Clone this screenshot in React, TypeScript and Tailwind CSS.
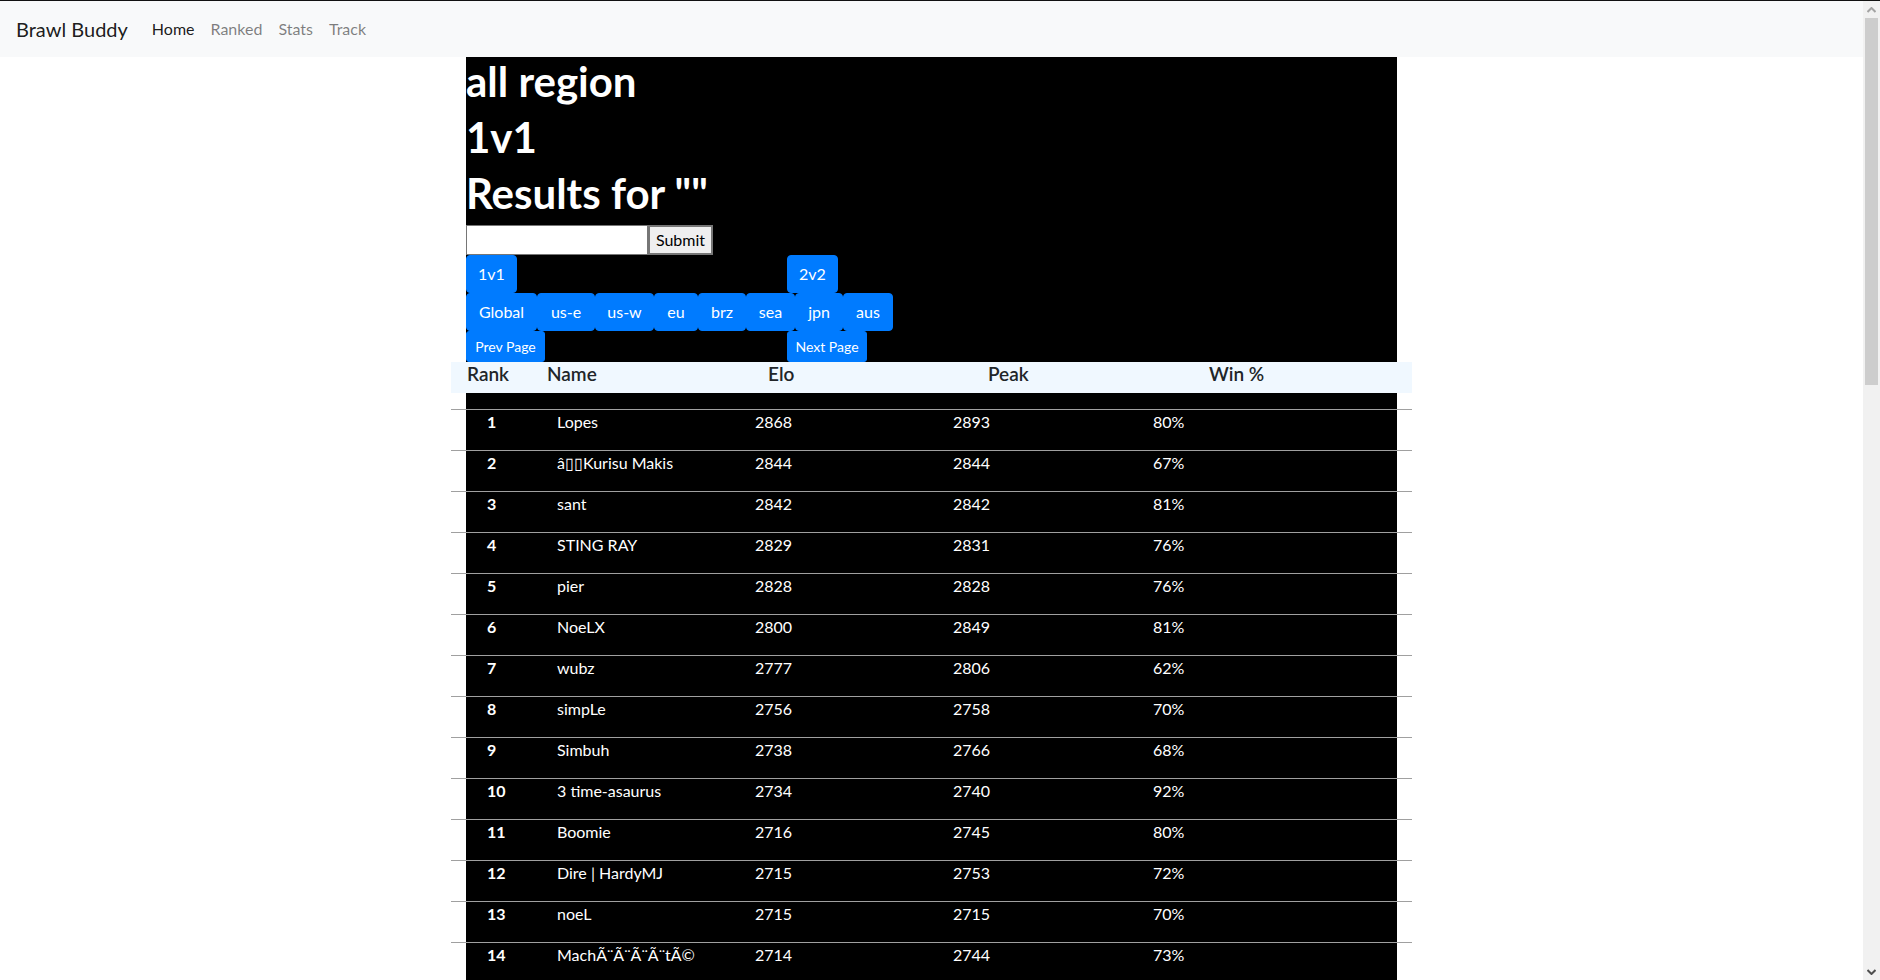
import React, { useState } from "react";

interface Player {
  rank: number;
  name: string;
  elo: number;
  peak: number;
  win: string;
}

const players: Player[] = [
  { rank: 1, name: "Lopes", elo: 2868, peak: 2893, win: "80%" },
  { rank: 2, name: "â\u25AF\u25AFKurisu Makis", elo: 2844, peak: 2844, win: "67%" },
  { rank: 3, name: "sant", elo: 2842, peak: 2842, win: "81%" },
  { rank: 4, name: "STING RAY", elo: 2829, peak: 2831, win: "76%" },
  { rank: 5, name: "pier", elo: 2828, peak: 2828, win: "76%" },
  { rank: 6, name: "NoeLX", elo: 2800, peak: 2849, win: "81%" },
  { rank: 7, name: "wubz", elo: 2777, peak: 2806, win: "62%" },
  { rank: 8, name: "simpLe", elo: 2756, peak: 2758, win: "70%" },
  { rank: 9, name: "Simbuh", elo: 2738, peak: 2766, win: "68%" },
  { rank: 10, name: "3 time-asaurus", elo: 2734, peak: 2740, win: "92%" },
  { rank: 11, name: "Boomie", elo: 2716, peak: 2745, win: "80%" },
  { rank: 12, name: "Dire | HardyMJ", elo: 2715, peak: 2753, win: "72%" },
  { rank: 13, name: "noeL", elo: 2715, peak: 2715, win: "70%" },
  { rank: 14, name: "MachÃ¨Ã¨Ã¨Ã¨tÃ©", elo: 2714, peak: 2744, win: "73%" },
];

const regions = [
  { name: "Global", w: "w-[71px]" },
  { name: "us-e", w: "w-[58px]" },
  { name: "us-w", w: "w-[59px]" },
  { name: "eu", w: "w-[44px]" },
  { name: "brz", w: "w-[48px]" },
  { name: "sea", w: "w-[49px]" },
  { name: "jpn", w: "w-[48px]" },
  { name: "aus", w: "w-[50px]" },
];

const btn =
  "bg-[#007bff] text-white border border-[#007bff] rounded-[4px] text-base leading-6 py-[6px] text-center";
const btnSm =
  "bg-[#007bff] text-white border border-[#007bff] rounded-[3px] text-sm leading-[21px] py-1 text-center";

// browser scrollbar strip on the right edge
const Scrollbar = () => (
  <div className="w-[17px] bg-[#f1f1f1] flex flex-col items-center shrink-0">
    <div className="h-[17px] w-full flex items-center justify-center">
      <svg width="9" height="6" viewBox="0 0 9 6">
        <path d="M0.5 5 L4.5 1 L8.5 5" stroke="#a3a3a3" strokeWidth="2" fill="none" />
      </svg>
    </div>
    <div className="w-[13px] h-[367px] bg-[#cdcdcd]" />
    <div className="flex-1" />
    <div className="h-[17px] w-full flex items-center justify-center">
      <svg width="9" height="6" viewBox="0 0 9 6">
        <path d="M0.5 1 L4.5 5 L8.5 1" stroke="#505050" strokeWidth="2" fill="none" />
      </svg>
    </div>
  </div>
);

const App: React.FC = () => {
  const [query, setQuery] = useState("");

  return (
    <div className="h-screen flex border-t border-[#111] bg-white font-['Lato',sans-serif] text-[#212529] overflow-hidden">
      <div className="flex-1 overflow-hidden">
        {/* navbar */}
        <nav className="bg-[#f8f9fa] h-[56px] flex items-center px-4">
          <span className="text-xl leading-[30px] text-black/90 mr-4">Brawl Buddy</span>
          <a className="px-2 leading-6 text-black/90" href="#">Home</a>
          <a className="px-2 leading-6 text-black/50" href="#">Ranked</a>
          <a className="px-2 leading-6 text-black/50" href="#">Stats</a>
          <a className="px-2 leading-6 text-black/50" href="#">Track</a>
        </nav>

        <div className="mx-auto w-[931px] bg-black text-white">
          <h1 className="text-[42px] leading-[48px] font-bold mb-2">all region</h1>
          <h1 className="text-[42px] leading-[48px] font-bold mb-2">1v1</h1>
          <h1 className="text-[42px] leading-[48px] font-bold mb-2">Results for "{query}"</h1>

          <form className="flex h-[30px]" onSubmit={(e) => e.preventDefault()}>
            <input
              value={query}
              onChange={(e) => setQuery(e.target.value)}
              className="w-[182px] h-[30px] bg-white border border-[#767676] text-black px-1 outline-none"
            />
            <button className="w-[65px] h-[30px] bg-[#efefef] border-2 border-[#767676] text-black text-base leading-6">
              Submit
            </button>
          </form>

          <div className="flex">
            <div className="w-[321px]">
              <button className={`${btn} w-[51px]`}>1v1</button>
            </div>
            <button className={`${btn} w-[51px]`}>2v2</button>
          </div>

          <div className="flex">
            {regions.map((r) => (
              <button key={r.name} className={`${btn} ${r.w}`}>
                {r.name}
              </button>
            ))}
          </div>

          <div className="flex">
            <div className="w-[321px]">
              <button className={`${btnSm} w-[79px]`}>Prev Page</button>
            </div>
            <button className={`${btnSm} w-[80px]`}>Next Page</button>
          </div>

          {/* table */}
          <div className="-mx-[15px]">
            <div className="bg-[#f0f8ff] h-[31px] text-[#212529] text-[19px] leading-6 font-semibold grid grid-cols-[16px_80px_221px_220px_221px_1fr]">
              <span />
              <span>Rank</span>
              <span>Name</span>
              <span>Elo</span>
              <span>Peak</span>
              <span>Win %</span>
            </div>
            <div className="h-4" />
            {players.map((p) => (
              <div
                key={p.rank}
                className="border-t border-[#a0a0a0] grid grid-cols-[36px_70px_198px_198px_200px_1fr] text-base leading-6 pb-4"
              >
                <span />
                <span className="font-bold">{p.rank}</span>
                <span>{p.name}</span>
                <span>{p.elo}</span>
                <span>{p.peak}</span>
                <span>{p.win}</span>
              </div>
            ))}
          </div>
        </div>
      </div>
      <Scrollbar />
    </div>
  );
};

export default App;
